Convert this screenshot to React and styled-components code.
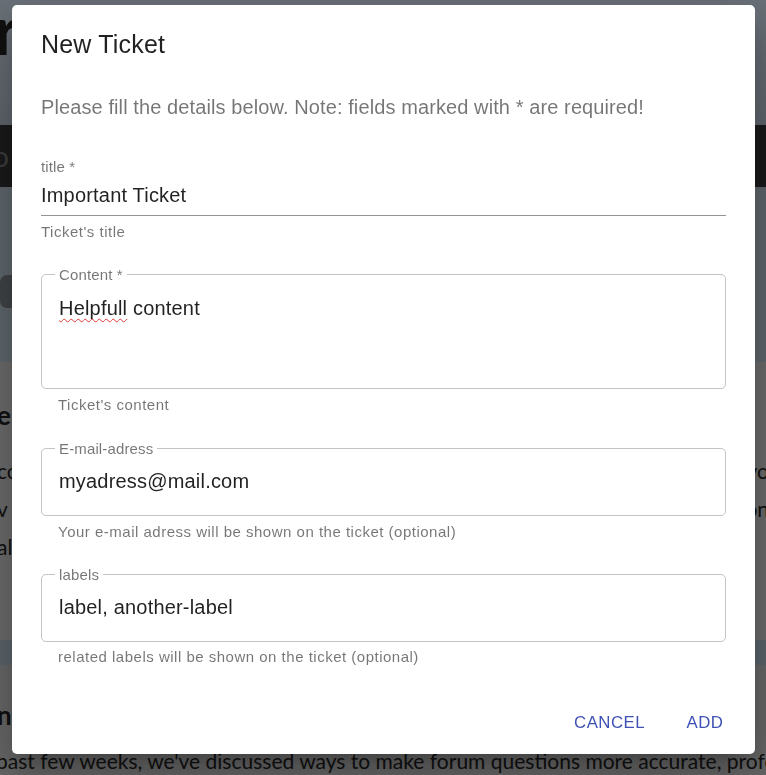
import React from "react";
//styling
import styled, { createGlobalStyle } from "styled-components";

const GlobalStyle = createGlobalStyle`
  html, body {
    margin: 0;
    padding: 0;
  }
  body {
    font-family: "Liberation Sans", Arial, sans-serif;
    overflow: hidden;
  }
`;

const App = () => {
  return (
    <>
      <GlobalStyle />
      <Page>
        <Header>
          <BigWord>r</BigWord>
        </Header>
        <NavBar>
          <span>o</span>
        </NavBar>
        <Hero>
          <Pill />
        </Hero>
        <Article>
          <ArticleTitle>e</ArticleTitle>
          <TextRow>
            <span>cc</span>
            <span>yo</span>
          </TextRow>
          <TextRow>
            <span>v</span>
            <span>on</span>
          </TextRow>
          <TextRow>
            <span>al</span>
            <span></span>
          </TextRow>
        </Article>
        <Band />
        <Footer>
          <ArticleTitle $top={35}>n</ArticleTitle>
          <Paragraph>
            past few weeks, we've discussed ways to make forum questions more
            accurate, professional
          </Paragraph>
        </Footer>
      </Page>

      <Backdrop>
        <Dialog role="dialog">
          <DialogTitle>New Ticket</DialogTitle>
          <DialogContent>
            <Description>
              Please fill the details below. Note: fields marked with * are
              required!
            </Description>

            <StandardField>
              <SmallLabel>title *</SmallLabel>
              <UnderlinedInput readOnly value="Important Ticket" />
              <Helper $offset={7}>Ticket's title</Helper>
            </StandardField>

            <OutlinedBox>
              <Legend>Content *</Legend>
              <TextArea>
                <Misspelled>Helpfull</Misspelled> content
              </TextArea>
            </OutlinedBox>
            <Helper $offset={7} $indent={17}>
              Ticket's content
            </Helper>

            <OutlinedBox $gap={27}>
              <Legend>E-mail-adress</Legend>
              <OutlinedInput readOnly value="myadress@mail.com" />
            </OutlinedBox>
            <Helper $offset={7} $indent={17}>
              Your e-mail adress will be shown on the ticket (optional)
            </Helper>

            <OutlinedBox $gap={26}>
              <Legend>labels</Legend>
              <OutlinedInput readOnly value="label, another-label" />
            </OutlinedBox>
            <Helper $offset={6} $indent={17}>
              related labels will be shown on the ticket (optional)
            </Helper>
          </DialogContent>

          <DialogActions>
            <TextButton>Cancel</TextButton>
            <TextButton>Add</TextButton>
          </DialogActions>
        </Dialog>
      </Backdrop>
    </>
  );
};

/* page behind the modal */

const Page = styled.div`
  width: 766px;
  height: 775px;
  overflow: hidden;
  display: flex;
  flex-direction: column;
  font-family: Lato, "Liberation Sans", sans-serif;
  color: #222;
`;

const Header = styled.header`
  height: 125px;
  flex-shrink: 0;
  background: linear-gradient(#d4e2f0, #bccad6);
`;

const BigWord = styled.h1`
  margin: 0 0 0 -6px;
  padding-top: 4px;
  font-size: 68px;
  line-height: 50px;
  font-weight: 700;
  color: #222;
`;

const NavBar = styled.nav`
  height: 62px;
  flex-shrink: 0;
  display: flex;
  align-items: center;
  background: #343434;
  color: #787878;
  font-size: 28px;
  span {
    margin-left: -7px;
  }
`;

const Hero = styled.section`
  height: 175px;
  flex-shrink: 0;
  background: #becdd8;
`;

const Pill = styled.div`
  margin-top: 88px;
  width: 120px;
  height: 33px;
  background: #80868c;
  border-radius: 7px;
`;

const Article = styled.section`
  height: 278px;
  flex-shrink: 0;
  background: #d6d6d6;
  display: flex;
  flex-direction: column;
`;

const ArticleTitle = styled.h2`
  margin: ${(p) => p.$top || 38}px 0 0 -3px;
  font-size: 26px;
  line-height: 30px;
  font-weight: 700;
`;

const TextRow = styled.div`
  display: flex;
  justify-content: space-between;
  margin: 10px -3px 0;
  font-size: 21px;
  line-height: 28px;
  &:nth-of-type(1) {
    margin-top: 27px;
  }
`;

const Band = styled.div`
  height: 25px;
  flex-shrink: 0;
  background: #b8c8d4;
`;

const Footer = styled.section`
  flex: 1;
  background: #cecece;
  display: flex;
  flex-direction: column;
`;

const Paragraph = styled.p`
  margin: 17px 0 0 -4px;
  font-size: 21px;
  line-height: 28px;
  white-space: nowrap;
`;

/* modal */

const Backdrop = styled.div`
  position: fixed;
  inset: 0;
  background: rgba(0, 0, 0, 0.5);
  display: flex;
  align-items: flex-start;
  padding: 5px 0 0 12px;
`;

const Dialog = styled.div`
  width: 743px;
  height: 749px;
  box-sizing: border-box;
  display: flex;
  flex-direction: column;
  background: #fff;
  border-radius: 5px;
  box-shadow: 0 13px 18px -8px rgba(0, 0, 0, 0.2),
    0 29px 46px 4px rgba(0, 0, 0, 0.14), 0 11px 55px 10px rgba(0, 0, 0, 0.12);
`;

const DialogTitle = styled.h2`
  margin: 0;
  padding: 20px 29px 0;
  font-size: 25px;
  line-height: 38px;
  font-weight: 400;
  letter-spacing: 0.19px;
  color: rgba(0, 0, 0, 0.87);
`;

const DialogContent = styled.div`
  display: flex;
  flex-direction: column;
  padding: 0 29px;
`;

const Description = styled.p`
  margin: 30px 0 0;
  font-size: 20px;
  line-height: 29px;
  letter-spacing: 0.1px;
  color: rgba(0, 0, 0, 0.54);
`;

const StandardField = styled.div`
  display: flex;
  flex-direction: column;
  margin-top: 36px;
`;

const SmallLabel = styled.label`
  font-size: 15px;
  line-height: 17px;
  letter-spacing: 0.14px;
  color: rgba(0, 0, 0, 0.54);
`;

const UnderlinedInput = styled.input`
  margin: 9px 0 0;
  padding: 0 0 8px;
  height: 23px;
  border: none;
  border-bottom: 1px solid rgba(0, 0, 0, 0.42);
  outline: none;
  background: transparent;
  font-family: "Liberation Sans", Arial, sans-serif;
  font-size: 20px;
  line-height: 23px;
  letter-spacing: 0.19px;
  color: rgba(0, 0, 0, 0.87);
`;

const Helper = styled.p`
  margin: ${(p) => p.$offset}px 0 0 ${(p) => p.$indent || 0}px;
  font-size: 15px;
  line-height: 17px;
  letter-spacing: 0.5px;
  color: rgba(0, 0, 0, 0.54);
`;

const OutlinedBox = styled.fieldset`
  margin: ${(p) => p.$gap || 26}px 0 0;
  padding: 0;
  min-width: 0;
  border: 1px solid rgba(0, 0, 0, 0.23);
  border-radius: 5px;
`;

const Legend = styled.legend`
  margin-left: 13px;
  padding: 0 4px;
  font-size: 15px;
  line-height: 17px;
  letter-spacing: 0.14px;
  color: rgba(0, 0, 0, 0.54);
`;

const TextArea = styled.div`
  height: 105px;
  box-sizing: border-box;
  padding: 14px 17px 0;
  font-size: 20px;
  line-height: 23px;
  letter-spacing: 0.19px;
  color: rgba(0, 0, 0, 0.87);
`;

const Misspelled = styled.span`
  text-decoration: underline wavy #e53935;
  text-decoration-thickness: 1px;
  text-underline-offset: 3px;
  text-decoration-skip-ink: none;
`;

const OutlinedInput = styled.input`
  display: block;
  width: 100%;
  height: 58px;
  box-sizing: border-box;
  padding: 13px 17px 22px;
  border: none;
  outline: none;
  background: transparent;
  font-family: "Liberation Sans", Arial, sans-serif;
  font-size: 20px;
  line-height: 23px;
  letter-spacing: 0.19px;
  color: rgba(0, 0, 0, 0.87);
`;

const DialogActions = styled.div`
  margin-top: auto;
  display: flex;
  justify-content: flex-end;
  gap: 10px;
  padding: 10px;
`;

const TextButton = styled.button`
  min-width: 80px;
  padding: 7px 10px;
  border: none;
  border-radius: 5px;
  background: none;
  font-family: "Liberation Sans", Arial, sans-serif;
  font-size: 16.8px;
  line-height: 29.4px;
  font-weight: 400;
  letter-spacing: 0.48px;
  text-transform: uppercase;
  color: #3f51b5;
  cursor: pointer;
`;

export default App;
